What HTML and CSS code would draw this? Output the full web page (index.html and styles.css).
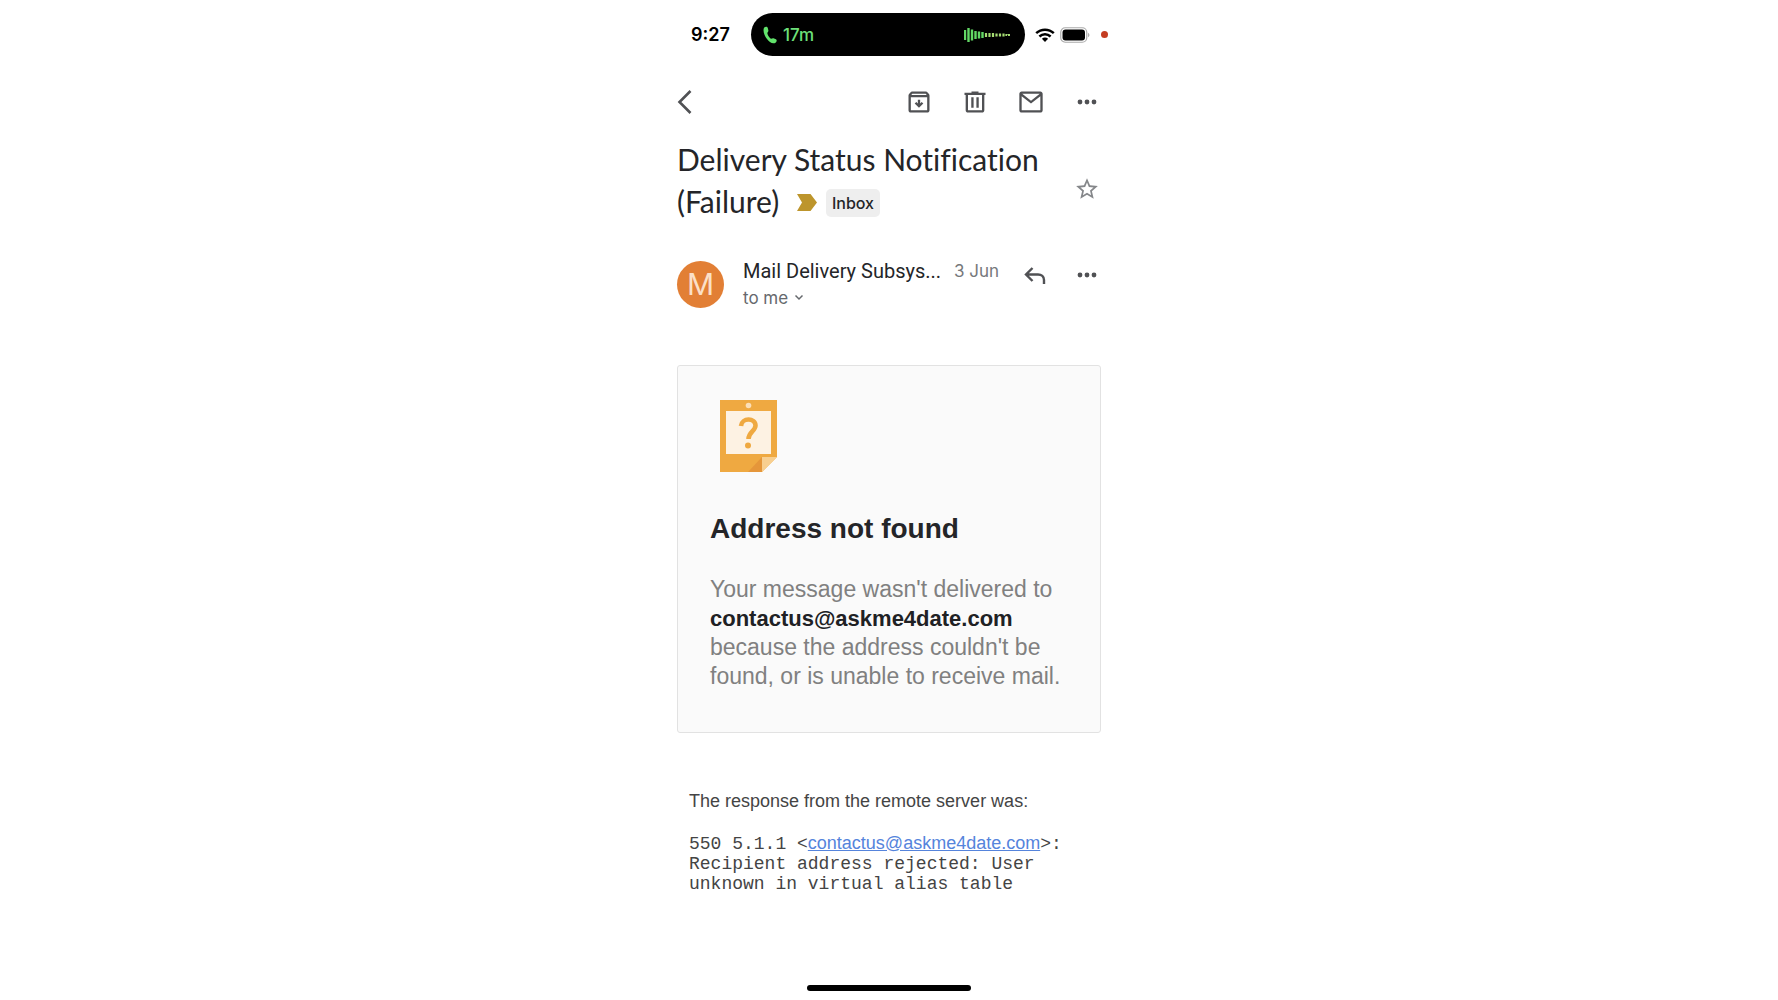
FILE: index.html
```html
<!DOCTYPE html>
<html lang="en">
<head>
<meta charset="utf-8">
<meta name="viewport" content="width=device-width, initial-scale=1">
<title>Delivery Status Notification (Failure)</title>
<link rel="stylesheet" href="styles.css">
</head>
<body>
<div class="screen">
  <header class="status">
    <time class="clock">9:27</time>
    <div class="island">
      <svg class="phone" viewBox="0 0 14 18" width="14" height="18" aria-hidden="true"><path d="M1.200 1.600C2.400.2 4.400.4 4.800 2l.6 2.600c.2 1.200-1.200 1.700-1 2.900.4 1.800 1.700 3.900 3.200 5 1 .6 1.700-.6 2.900-.2l2.400 1c1.300.8.9 2.500-.4 3.400-2.700 1.700-6.400-.6-8.700-3.900C1.500 9.600-.6 4.200 1.200 1.600z" fill="#62e36c"/></svg>
      <span class="duration">17m</span>
      <svg class="wave" viewBox="0 0 46 16" width="46" height="16" aria-hidden="true"><path d="M1 3v10M4.500 1v14M8 2.500v11M11.500 4v8M15 4.500v7M18.500 5v6" stroke="#62d765" stroke-width="2.400"/><path d="M22 6v4M25.500 6v4M29 6v4M32.500 6.500v3M36 6.500v3M39.500 6.500v3M42.500 7v2M45 7v2" stroke="#a5dc72" stroke-width="2.200"/></svg>
    </div>
    <div class="signals">
      <svg viewBox="0 0 20 14" width="20" height="14" aria-hidden="true"><g fill="none" stroke="#000" stroke-width="2.500"><path d="M1.200 5.200c5-4.700 12.600-4.700 17.600 0"/><path d="M4.400 8.500c3.200-3 8-3 11.200 0"/></g><path d="M6.900 10.700c1.800-1.500 4.400-1.500 6.200 0L10 14z"/></svg>
      <svg viewBox="0 0 30 16" width="30" height="16" aria-hidden="true"><rect x=".75" y=".75" width="26" height="14.500" rx="4.500" fill="none" stroke="#aaa" stroke-width="1.200"/><rect x="2.500" y="2.500" width="22.500" height="11" rx="3"/><path d="M28.300 5.800c1.400.7 1.400 3.700 0 4.400z" fill="#888"/></svg>
    </div>
    <span class="recording"></span>
  </header>

  <nav class="toolbar" aria-label="Message actions">
    <button class="icon back" aria-label="Back"><svg viewBox="0 0 16 26" width="16" height="26"><path d="M13.500 2 2.500 13l11 11" fill="none" stroke="#505154" stroke-width="2.600"/></svg></button>
    <button class="icon" aria-label="Archive"><svg viewBox="0 0 24 24" width="28" height="28"><path d="M20.540 5.230l-1.390-1.680C18.880 3.210 18.470 3 18 3H6c-.47 0-.88.210-1.160.550L3.460 5.230C3.170 5.570 3 6.020 3 6.500V19c0 1.100.9 2 2 2h14c1.100 0 2-.9 2-2V6.500c0-.48-.17-.93-.46-1.270zM6.240 5h11.520l.83 1H5.420l.82-1zM5 19V8h14v11H5zm8-9h-2v3.200l-1.300-1.300-1.400 1.400L12 17l3.700-3.700-1.400-1.400-1.300 1.300z"/></svg></button>
    <button class="icon" aria-label="Delete"><svg viewBox="0 0 24 24" width="28" height="28"><path d="M15 4V3H9v1H3v2h1v13c0 1.100.9 2 2 2h12c1.100 0 2-.9 2-2V6h1V4h-6zm3 15H6V6h12v13zM8.800 8h2v9h-2zm4.400 0h2v9h-2z"/></svg></button>
    <button class="icon" aria-label="Mark as unread"><svg viewBox="0 0 24 24" width="28" height="28"><path d="M22 5c0-1.100-.9-2-2-2H4c-1.100 0-2 .9-2 2v14c0 1.100.9 2 2 2h16c1.100 0 2-.9 2-2zm-2.500 0L12 11 4.500 5zM20 19H4V7l8 6.300L20 7z"/></svg></button>
    <button class="icon" aria-label="More options"><svg viewBox="0 0 28 28" width="28" height="28"><circle cx="7" cy="14" r="2.400"/><circle cx="14" cy="14" r="2.400"/><circle cx="21" cy="14" r="2.400"/></svg></button>
  </nav>

  <main>
    <section class="subject">
      <h1>Delivery Status Notification (Failure)
        <span class="labels"><svg viewBox="0 0 20 17" width="20" height="17" aria-hidden="true"><path d="M0 0h13.500L20 8.500 13.500 17H0l5-8.500z" fill="#bd952c"/></svg><span class="chip">Inbox</span></span>
      </h1>
      <button class="icon star" aria-label="Star"><svg viewBox="0 0 24 24" width="26" height="26"><path d="M22 9.240l-7.190-.62L12 2 9.190 8.630 2 9.240l5.460 4.730L5.820 21 12 17.270 18.180 21l-1.630-7.030L22 9.240zM12 15.400l-3.760 2.270 1-4.280-3.320-2.880 4.380-.38L12 6.100l1.710 4.040 4.380.38-3.320 2.880 1 4.280L12 15.400z"/></svg></button>
    </section>

    <section class="sender">
      <span class="avatar">M</span>
      <div class="who">
        <div class="from"><span class="name">Mail Delivery Subsys...</span><time class="date">3 Jun</time></div>
        <button class="to">to me<svg viewBox="0 0 10 8" width="10" height="8" aria-hidden="true"><path d="m1.500 1.500 3.500 3.500 3.500-3.500" fill="none" stroke="#66696d" stroke-width="1.500"/></svg></button>
      </div>
      <div class="actions">
        <button class="icon" aria-label="Reply"><svg viewBox="0 0 28 28" width="28" height="28"><path d="M11.500 7 5 13.500l6.500 6.500M5 13.500h12c3.500 0 6 2 6 5.500v4" fill="none" stroke="#505154" stroke-width="2.400"/></svg></button>
        <button class="icon" aria-label="More message options"><svg viewBox="0 0 28 28" width="28" height="28"><circle cx="7" cy="14" r="2.400"/><circle cx="14" cy="14" r="2.400"/><circle cx="21" cy="14" r="2.400"/></svg></button>
      </div>
    </section>

    <article class="card">
      <svg class="note" viewBox="0 0 57 72" width="57" height="72" aria-hidden="true"><path d="M0 0h57v57L42 72H0z" fill="#efa941"/><path d="M42 57v15H28z" fill="#e5963a"/><path d="M42 57h15L42 72z" fill="#f8cf90"/><path d="M6 11h45v43H6z" fill="#fdf2e3"/><circle cx="28.500" cy="5.500" r="2.800" fill="#fbdfb8"/><path d="M21 26c.6-8.500 14.500-8.500 14.500-.5C35.500 31 28.500 32 28.500 39" fill="none" stroke="#efa941" stroke-width="4.600"/><circle cx="28" cy="45.500" r="3" fill="#efa941"/></svg>
      <h2>Address not found</h2>
      <p>Your message wasn't delivered to <strong>contactus@askme4date.com</strong> because the address couldn't be found, or is unable to receive mail.</p>
    </article>

    <section class="response">
      <p>The response from the remote server was:</p>
      <p class="code">550 5.1.1 &lt;<a href="mailto:contactus@askme4date.com">contactus@askme4date.com</a>&gt;: Recipient address rejected: User unknown in virtual alias table</p>
    </section>
  </main>
  <div class="home"></div>
</div>
</body>
</html>
```

FILE: styles.css
```css
* {
  box-sizing: border-box;
}

body {
  margin: 0;
  background: #fff;
  color: #242528;
  font-family: "Liberation Sans", Arial, sans-serif;
}

h1,
h2,
p {
  margin: 0;
}

button {
  padding: 0;
  border: 0;
  background: none;
  font: inherit;
  color: inherit;
  cursor: pointer;
}

svg {
  display: block;
  flex: none;
}

.screen {
  display: flex;
  flex-direction: column;
  width: 100%;
  max-width: 440px;
  min-height: 100vh;
  margin: 0 auto;
  padding: 13px 8px 9px;
}

.status {
  display: flex;
  align-items: center;
  padding-left: 14px;
  margin-right: -7px;
}

.clock {
  width: 60px;
  color: #000;
  font: 600 18px/24px Inter, sans-serif;
}

.island {
  display: flex;
  align-items: center;
  gap: 6px;
  flex: 1;
  height: 43px;
  padding: 0 15px 0 12px;
  border-radius: 22px;
  background: #000;
}

.duration {
  flex: 1;
  color: #6ee07a;
  font: 500 17px/24px Inter, sans-serif;
}

.signals {
  display: flex;
  align-items: center;
  gap: 5px;
  margin: 0 11px 0 10px;
}

.recording {
  width: 7px;
  height: 7px;
  border-radius: 50%;
  background: #c43d22;
}

.toolbar {
  display: flex;
  align-items: center;
  gap: 28px;
  margin-top: 32px;
}

.icon {
  display: flex;
  flex: none;
  fill: #505154;
}

.back {
  margin-right: auto;
}

.subject {
  display: flex;
  align-items: center;
  justify-content: space-between;
  margin-top: 22px;
}

h1 {
  flex: 1;
  font: 400 30px/42px Lato, sans-serif;
  font-variant-ligatures: none;
}

.labels {
  display: inline-flex;
  align-items: center;
  gap: 9px;
  margin-left: 10px;
  vertical-align: 2px;
}

.chip {
  padding: 0 6px;
  border-radius: 5px;
  background: #eee;
  font: 500 16px/28px Inter, sans-serif;
}

.star {
  margin: 18px 1px 0 0;
  fill: #85878a;
}

.sender {
  display: flex;
  margin-top: 39px;
}

.avatar {
  flex: none;
  width: 47px;
  height: 47px;
  border-radius: 50%;
  background: #e27f35;
  color: #fbe0c8;
  font: 400 30px/47px Inter, sans-serif;
  text-align: center;
}

.who {
  flex: 1;
  margin-left: 19px;
}

.from {
  display: flex;
  justify-content: space-between;
  align-items: center;
  height: 20px;
}

.name {
  font: 400 20px/20px Roboto, sans-serif;
}

.date {
  color: #76787b;
  font: 400 17px/20px Inter, sans-serif;
}

.to {
  display: flex;
  align-items: center;
  gap: 6px;
  margin-top: 5px;
  color: #66696d;
  font: 400 17px/24px Inter, sans-serif;
}

.actions {
  display: flex;
  gap: 24px;
  margin-left: 22px;
}

.actions .icon {
  height: 28px;
}

.card {
  margin-top: 55px;
  padding: 34px 32px 41px;
  border: 1px solid #e2e2e2;
  border-radius: 3px;
  background: #fafafa;
}

.note {
  margin-left: 10px;
}

h2 {
  margin-top: 41px;
  font-size: 28px;
  line-height: 32px;
}

.card p {
  margin-top: 30px;
  color: #808080;
  font-size: 23px;
  line-height: 29px;
}

.card strong {
  color: #202124;
  font-size: 22px;
}

.response {
  padding: 0 12px;
  margin-top: 56px;
  color: #444;
  font-size: 18px;
  line-height: 24px;
}

.response .code {
  margin-top: 20px;
  font-family: "Liberation Mono", monospace;
  line-height: 20px;
}

.code a {
  color: #5584dc;
  font-family: "Liberation Sans", Arial, sans-serif;
}

.home {
  width: 164px;
  height: 6px;
  margin: auto auto 0;
  border-radius: 3px;
  background: #000;
}
```
